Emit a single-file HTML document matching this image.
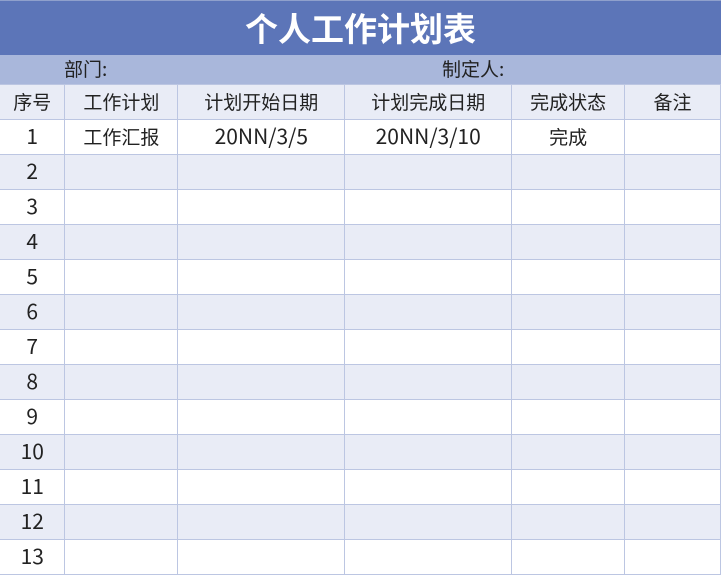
<!DOCTYPE html>
<html><head><meta charset="utf-8"><style>
*{margin:0;padding:0;box-sizing:border-box}
body{width:721px;height:575px;background:#fff;font-family:"Noto Sans CJK SC",sans-serif;color:#222;position:relative;overflow:hidden}
.title{position:absolute;left:0;top:0;width:721px;height:55px;background:#5C75B8;color:#fff;font-size:33px;font-weight:bold;text-align:center;line-height:52px;border-top:1px solid #8fa0cc}
.sub{position:absolute;left:0;top:55px;width:721px;height:29px;background:#A9B7DB;font-size:19px;line-height:27px}
.sub span{position:absolute;top:0}
table{position:absolute;left:0;top:84px;border-collapse:collapse;table-layout:fixed}
td{border:1px solid #BCC6E2;height:35px;line-height:31px;text-align:center;font-size:19px;padding:0 0 2px;vertical-align:middle;white-space:nowrap}
td.n{font-size:21px}
tr:nth-child(odd) td{background:#E9ECF6}
tr:nth-child(even) td{background:#fff}
tr td:first-child{border-left:none}
</style></head><body>
<div class="title">个人工作计划表</div>
<div class="sub"><span style="left:64px">部门:</span><span style="left:442px">制定人:</span></div>
<table>
<colgroup><col style="width:65px"><col style="width:113px"><col style="width:167px"><col style="width:167px"><col style="width:113px"><col style="width:96px"></colgroup>
<tr><td>序号</td><td>工作计划</td><td>计划开始日期</td><td>计划完成日期</td><td>完成状态</td><td>备注</td></tr>
<tr><td class="n">1</td><td>工作汇报</td><td class="n">20NN/3/5</td><td class="n">20NN/3/10</td><td>完成</td><td></td></tr>
<tr><td class="n">2</td><td></td><td></td><td></td><td></td><td></td></tr>
<tr><td class="n">3</td><td></td><td></td><td></td><td></td><td></td></tr>
<tr><td class="n">4</td><td></td><td></td><td></td><td></td><td></td></tr>
<tr><td class="n">5</td><td></td><td></td><td></td><td></td><td></td></tr>
<tr><td class="n">6</td><td></td><td></td><td></td><td></td><td></td></tr>
<tr><td class="n">7</td><td></td><td></td><td></td><td></td><td></td></tr>
<tr><td class="n">8</td><td></td><td></td><td></td><td></td><td></td></tr>
<tr><td class="n">9</td><td></td><td></td><td></td><td></td><td></td></tr>
<tr><td class="n">10</td><td></td><td></td><td></td><td></td><td></td></tr>
<tr><td class="n">11</td><td></td><td></td><td></td><td></td><td></td></tr>
<tr><td class="n">12</td><td></td><td></td><td></td><td></td><td></td></tr>
<tr><td class="n">13</td><td></td><td></td><td></td><td></td><td></td></tr>
</table>
</body></html>
